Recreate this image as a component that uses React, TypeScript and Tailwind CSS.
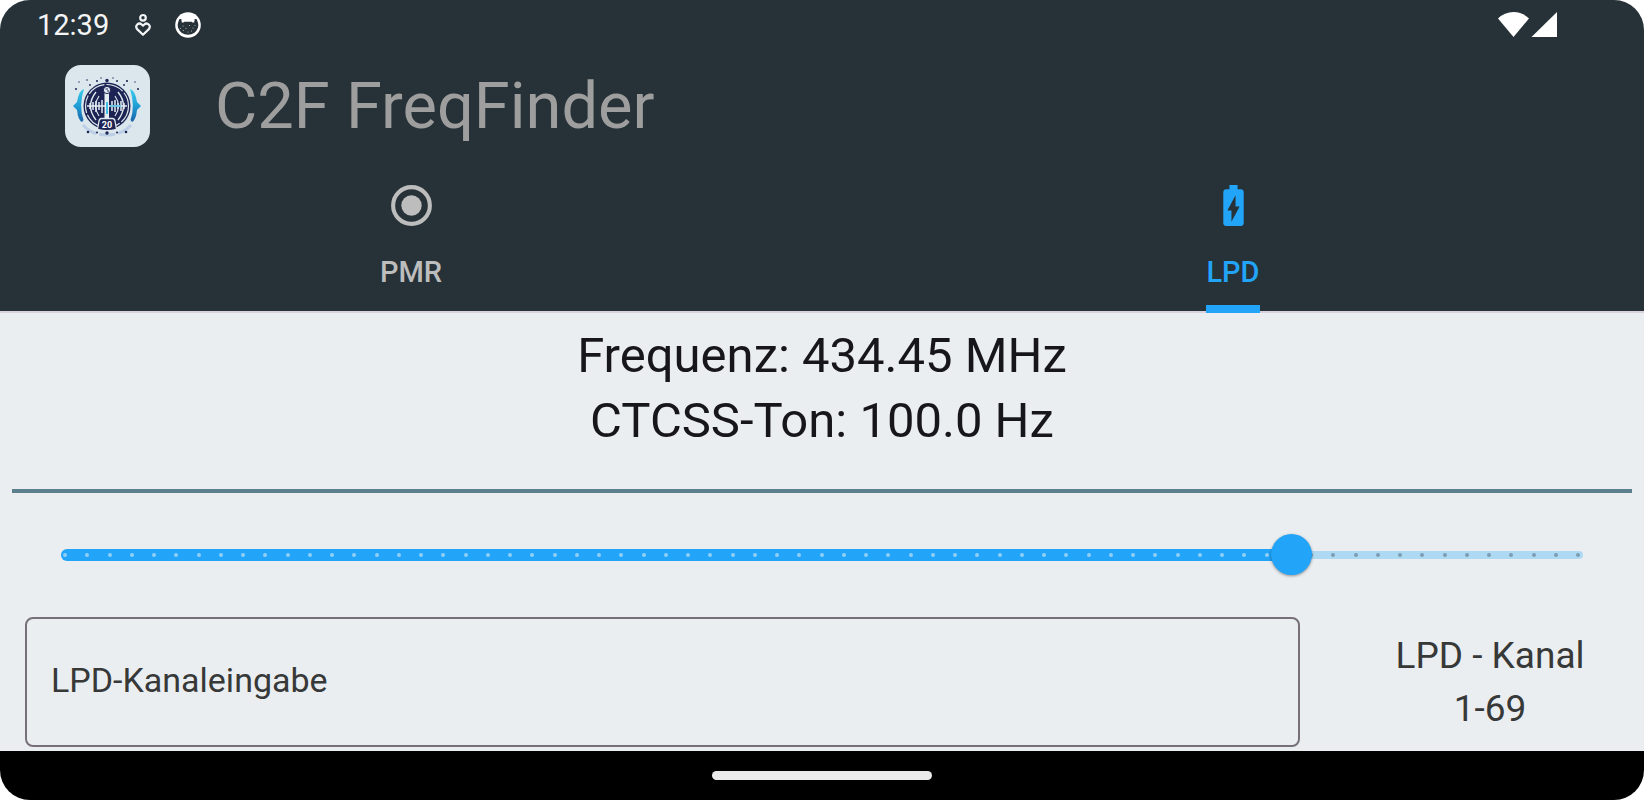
import { useState } from 'react';
import { clsx } from 'clsx';

type TabId = 'PMR' | 'LPD';

const CHANNELS = 69;

function HeartPersonIcon() {
  return (
    <svg viewBox="0 0 16 24" className="h-6 w-4" fill="none" stroke="#f1f3f4" strokeWidth="2.2">
      <circle cx="8" cy="4.8" r="2.8" />
      <path d="M8 21.8 L2.4 16.400 C-0.8 12.800 3.800 8.800 6.700 11.500 L8 12.700 L9.300 11.500 C12.200 8.800 16.800 12.800 13.600 16.400 Z" strokeLinejoin="round" />
    </svg>
  );
}

function CatIcon() {
  return (
    <svg viewBox="0 0 26 26" className="size-[26px]">
      <circle cx="13" cy="13" r="12.8" fill="#fff" />
      <path d="M4.500 7 L6.300 7 L6.800 10.500 H8.500 L9.500 9.800 H16.500 L17.500 10.500 H19.200 L19.700 7 H21.500 Q24.200 12 22.800 16 Q20.300 22.600 13 22.800 Q5.700 22.600 3.200 16 Q1.800 12 4.500 7Z" fill="#263238" />
      <g fill="#b5bcbf">
        <circle cx="8" cy="14" r=".6" />
        <circle cx="11" cy="16.500" r=".6" />
        <circle cx="14.500" cy="13.500" r=".6" />
        <circle cx="18" cy="16" r=".6" />
        <circle cx="5.500" cy="16.500" r=".6" />
        <circle cx="8.500" cy="18.500" r=".6" />
        <circle cx="13" cy="20" r=".6" />
        <circle cx="16.500" cy="19" r=".6" />
        <circle cx="20" cy="13.500" r=".6" />
      </g>
    </svg>
  );
}

function SignalIcons() {
  return (
    <svg viewBox="0 0 60 26" className="h-[26px] w-[60px]" fill="#fff">
      <path d="M15.500 25 L0 6.500 Q6.500 0 15.500 0 Q24.500 0 31 6.500 Z" />
      <path d="M33.500 25 L59 0 V25 Z" />
    </svg>
  );
}

function AppLogo() {
  return (
    <svg viewBox="0 0 85 82" className="h-[82px] w-[85px]" role="img" aria-label="C2F FreqFinder">
      <defs>
        <linearGradient id="arc" x1="0" y1="0" x2="0" y2="1">
          <stop offset="0" stopColor="#3fcbea" />
          <stop offset="0.5" stopColor="#1f9fd6" />
          <stop offset="1" stopColor="#1c64a8" />
        </linearGradient>
      </defs>
      <rect width="85" height="82" rx="16" fill="#dbe7ec" />
      <path d="M18 60 Q27 70 42 70 Q57 70 66 60" fill="none" stroke="#bccfe6" strokeWidth="3" strokeDasharray="16 3" />
      {/* side brackets */}
      <g fill="url(#arc)">
        <path d="M19 24 Q14 25 12 37 L8 41 L12 45 Q13 55 17 57 L18.500 55 Q13.500 41 19 24Z" />
        <path d="M65 24 Q70 25 72 37 L76 41 L72 45 Q71 55 67 57 L65.500 55 Q70.500 41 65 24Z" />
      </g>
      <circle cx="42" cy="41" r="23.500" fill="#1d2454" />
      <g fill="none" stroke="#dbe7ec">
        <circle cx="42" cy="41" r="21.500" strokeWidth="1.200" strokeDasharray="18 2" />
        <path d="M31 27 Q20 41 31 55 M53 27 Q64 41 53 55" strokeWidth="1.400" />
        <path d="M34 31 Q27 41 34 51 M50 31 Q57 41 50 51" strokeWidth="1.200" />
      </g>
      {/* waveform */}
      <path d="M22 41 H62 M25 38 V44 M28 37 V45 M31 36 V47 M34 37 V45 M37 35 V48 M47 36 V46 M50 35 V47 M53 38 V44 M56 36 V46 M59 38 V44" stroke="#e3edf2" strokeWidth="1.500" fill="none" />
      <path d="M45 41 H56" stroke="#43bfe6" strokeWidth="1.500" />
      <rect x="39.500" y="28" width="4.500" height="26" fill="#e3edf2" />
      <rect x="41" y="37" width="2" height="12" fill="#43bfe6" />
      <circle cx="42" cy="25" r="3.600" fill="#e3edf2" stroke="#1d2454" />
      <path d="M40.500 24 H43 M42 26 H44" stroke="#1d2454" />
      <path d="M32.500 64.500 L34 56 Q34.500 53.500 36.500 53.500 H47.500 Q49.500 53.500 50 56 L51.500 64.500 Q42 67 32.500 64.500Z" fill="#1d2454" stroke="#dbe7ec" strokeWidth="1.300" />
      <text x="42" y="63" textAnchor="middle" fill="#fff" className="font-[Roboto,sans-serif] text-[9px] font-bold">20</text>
      <g fill="#1d2454">
        <circle cx="42" cy="15.500" r="1.700" />
        <circle cx="32" cy="16" r="1" />
        <circle cx="52" cy="16" r="1" />
        <circle cx="36" cy="13" r=".7" />
        <circle cx="48" cy="13" r=".7" />
        <circle cx="22" cy="15" r=".8" />
        <circle cx="62" cy="16" r="1.100" />
        <circle cx="14" cy="17" r=".7" />
        <circle cx="70" cy="17" r=".7" />
        <circle cx="11" cy="24" r="1" />
        <circle cx="73" cy="24" r="1" />
        <circle cx="25" cy="20" r=".9" />
        <circle cx="59" cy="20" r=".9" />
        <circle cx="42" cy="68" r="1.700" />
        <circle cx="32" cy="67.500" r="1" />
        <circle cx="52" cy="67.500" r="1" />
        <circle cx="23" cy="67" r="1.300" />
        <circle cx="61" cy="67" r="1.300" />
      </g>
    </svg>
  );
}

function PmrIcon() {
  return (
    <svg viewBox="0 0 24 24" className="size-[49px]" fill="currentColor">
      <circle cx="12" cy="12" r="5" />
      <circle cx="12" cy="12" r="9" fill="none" stroke="currentColor" strokeWidth="2" />
    </svg>
  );
}

function LpdIcon() {
  return (
    <svg viewBox="0 0 24 24" className="size-[49px]" fill="currentColor">
      <path d="M15.670 4H14V2h-4v2H8.330C7.600 4 7 4.600 7 5.330v15.330C7 21.400 7.600 22 8.330 22h7.330c.740 0 1.340-.6 1.340-1.330V5.330C17 4.600 16.400 4 15.670 4zM11 20v-5.500H9L13 7v5.500h2L11 20z" />
    </svg>
  );
}

interface TabProps {
  id: TabId;
  active: boolean;
  icon: React.ReactNode;
  onSelect: (id: TabId) => void;
}

function Tab({ id, active, icon, onSelect }: TabProps) {
  return (
    <button
      type="button"
      role="tab"
      aria-selected={active}
      onClick={() => onSelect(id)}
      className={clsx('flex flex-1 flex-col items-center pt-[19px]', active ? 'text-[#22a4f8]' : 'text-[#bdbdbd]')}
    >
      {icon}
      <span className="mt-[22px] flex flex-col gap-[13px] text-[29px] font-medium leading-10">
        {id}
        <span className={clsx('h-2', active && 'bg-[#22a4f8]')} />
      </span>
    </button>
  );
}

interface SliderProps {
  value: number;
  onChange: (value: number) => void;
}

function ChannelSlider({ value, onChange }: SliderProps) {
  const percent = ((value - 1) / (CHANNELS - 1)) * 100;

  return (
    <div className="mx-[41px] mt-[41px] grid items-center">
      <div className="col-start-1 row-start-1 mx-5 h-2 rounded-full bg-[#aed9f3]" />
      <div className="col-start-1 row-start-1 mx-5">
        <div className="h-3 rounded-full bg-[#22a4f8]" style={{ width: `${percent}%` }} />
      </div>
      <div className="col-start-1 row-start-1 mx-[22px] flex justify-between">
        {Array.from({ length: CHANNELS }, (_, i) => (
          <span key={i} className={clsx('size-1 rounded-full', i < value ? 'bg-[#90cff6]' : 'bg-[#7c9db2]')} />
        ))}
      </div>
      <input
        type="range"
        aria-label="LPD-Kanal"
        min={1}
        max={CHANNELS}
        value={value}
        onChange={(e) => onChange(Number(e.target.value))}
        className="relative col-start-1 row-start-1 h-[41px] w-full appearance-none bg-transparent [&::-webkit-slider-thumb]:size-[41px] [&::-webkit-slider-thumb]:appearance-none [&::-webkit-slider-thumb]:rounded-full [&::-webkit-slider-thumb]:bg-[#22a4f8] [&::-webkit-slider-thumb]:shadow-[0_1px_3px_rgba(0,0,0,0.4)]"
      />
    </div>
  );
}

export default function App() {
  const [tab, setTab] = useState<TabId>('LPD');
  const [channel, setChannel] = useState(56);
  const frequency = (433.075 + (channel - 1) * 0.025).toFixed(3).replace(/0$/, '');

  return (
    <div className="bg-white">
      <div className="flex min-h-screen flex-col overflow-hidden rounded-[30px] bg-[#ebeef1] font-[Roboto,sans-serif]">
        <header className="bg-[#263238]">
          <div className="flex h-[50px] items-center pl-[37px] pr-[86px]">
            <span className="text-[29px] leading-none text-[#f5f5f5]">12:39</span>
            <div className="ml-[26px] flex items-center gap-6">
              <HeartPersonIcon />
              <CatIcon />
            </div>
            <div className="ml-auto">
              <SignalIcons />
            </div>
          </div>

          <div className="flex h-28 items-center gap-[65px] px-[65px]">
            <AppLogo />
            <h1 className="text-[65px] leading-none text-[#9e9e9e]">C2F FreqFinder</h1>
          </div>

          <div role="tablist" className="flex shadow-[inset_0_-2px_#d9d2de]">
            <Tab id="PMR" active={tab === 'PMR'} icon={<PmrIcon />} onSelect={setTab} />
            <Tab id="LPD" active={tab === 'LPD'} icon={<LpdIcon />} onSelect={setTab} />
          </div>
        </header>

        <main className="flex-1 pt-[10px] pb-1">
          <div className="text-center text-[49px] leading-[65px] text-[#17161a]">
            <p>Frequenz: {frequency} MHz</p>
            <p>CTCSS-Ton: 100.0 Hz</p>
          </div>

          <hr className="mx-3 mt-9 h-1 border-0 bg-[#5b7f8c]" />

          <ChannelSlider value={channel} onChange={setChannel} />

          <div className="mt-[42px] flex items-center pl-[25px] pr-3">
            <input
              id="channel"
              type="text"
              inputMode="numeric"
              placeholder="LPD-Kanaleingabe"
              className="h-[130px] min-w-0 flex-1 rounded-lg border-2 border-[#77707b] bg-transparent px-6 pb-1 text-[34px] text-[#373838] placeholder:text-[#373838]"
            />
            <label htmlFor="channel" className="ml-12 w-[284px] text-center text-[37px] leading-[53px] text-[#373838]">
              LPD - Kanal
              <br />
              1-69
            </label>
          </div>
        </main>

        <footer className="flex h-[49px] items-center justify-center bg-black">
          <div className="h-[9px] w-[220px] rounded-full bg-[#ebebeb]" />
        </footer>
      </div>
    </div>
  );
}
